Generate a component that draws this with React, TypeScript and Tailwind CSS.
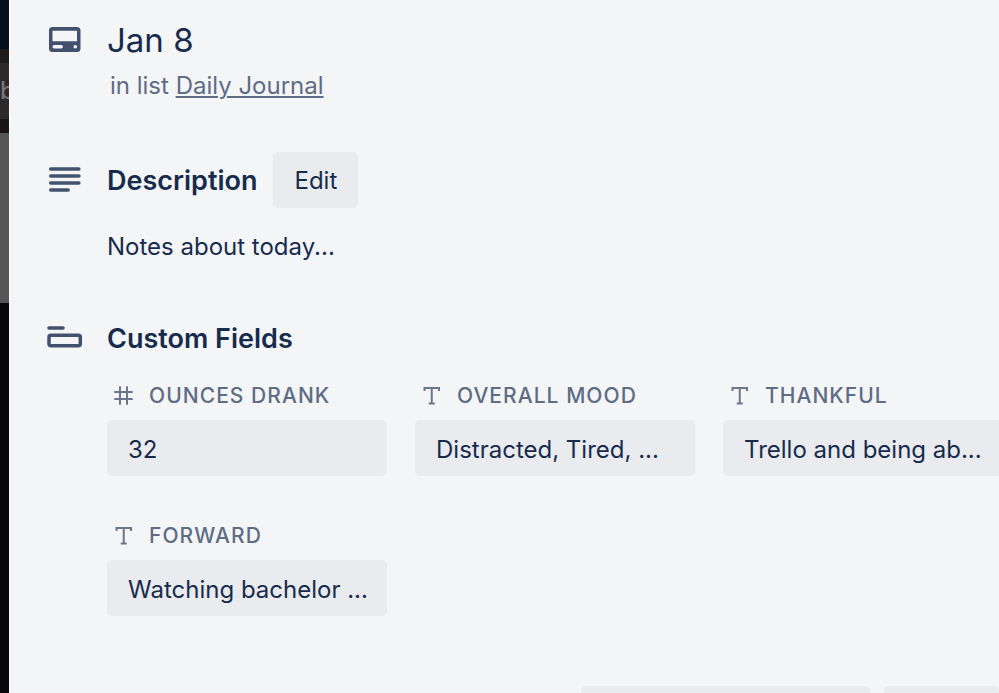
import { useState } from "react";
import type { ReactNode } from "react";

type FieldType = "number" | "text";

interface CustomField {
  id: string;
  name: string;
  type: FieldType;
  value: string;
}

const FIELDS: CustomField[] = [
  { id: "ounces", name: "Ounces Drank", type: "number", value: "32" },
  { id: "mood", name: "Overall Mood", type: "text", value: "Distracted, Tired, ..." },
  { id: "thankful", name: "Thankful", type: "text", value: "Trello and being ab..." },
  { id: "forward", name: "Forward", type: "text", value: "Watching bachelor ..." },
];

function CardIcon() {
  return (
    <svg viewBox="0 0 42 42" className="h-[42px] w-[42px]" aria-hidden="true">
      <path
        fill="currentColor"
        fillRule="evenodd"
        d="M8.500 8h24.500a3.500 3.500 0 0 1 3.500 3.500V29.500a3.500 3.500 0 0 1-3.500 3.500H8.500a3.500 3.500 0 0 1-3.500-3.500V11.500a3.500 3.500 0 0 1 3.500-3.500ZM8.500 11.700v10.500h24.500V11.700ZM10.200 26a1.700 1.700 0 0 0 0 3.400h7a1.700 1.700 0 0 0 0-3.400ZM31.300 25.900a1.800 1.800 0 1 0 0 3.600a1.800 1.800 0 1 0 0-3.600Z"
      />
    </svg>
  );
}

function DescriptionIcon() {
  return (
    <svg viewBox="0 0 42 42" className="h-[42px] w-[42px]" aria-hidden="true">
      <path
        d="M6.700 10h28.200M6.700 17h28.200M6.700 24h28.200M6.700 31h17.500"
        fill="none"
        stroke="currentColor"
        strokeWidth="3.500"
        strokeLinecap="round"
      />
    </svg>
  );
}

function FieldsIcon() {
  return (
    <svg viewBox="0 0 42 42" className="h-[42px] w-[42px]" aria-hidden="true">
      <g fill="none" stroke="currentColor" strokeWidth="3.500" strokeLinecap="round">
        <path d="M5 11h14" />
        <rect x="5" y="18.200" width="31.300" height="10.600" rx="2" />
      </g>
    </svg>
  );
}

function FieldTypeIcon({ type }: { type: FieldType }) {
  return (
    <svg viewBox="0 1 28 28" className="h-7 w-7 shrink-0 text-[#6b778c]" aria-hidden="true">
      {type === "number" ? (
        <path
          d="M11 6v17M18 6v17M6 11h17M6 18h17"
          fill="none"
          stroke="currentColor"
          strokeWidth="2"
          strokeLinecap="round"
        />
      ) : (
        <path
          d="M7.500 9V7h14.500v2M14.750 7v15.500M12.750 22.500h4"
          fill="none"
          stroke="currentColor"
          strokeWidth="2"
          strokeLinecap="square"
        />
      )}
    </svg>
  );
}

function SectionHeader({ icon, children }: { icon: ReactNode; children: ReactNode }) {
  return (
    <div className="flex h-14 items-center">
      <div className="w-[63px] shrink-0 text-[#42526e]">{icon}</div>
      {children}
    </div>
  );
}

function Field({ field }: { field: CustomField }) {
  const [value, setValue] = useState(field.value);

  return (
    <div>
      <label
        htmlFor={field.id}
        className="flex h-7 items-center gap-3 pl-0.5 text-[21px] leading-7 font-medium tracking-wider text-[#5e6c84] uppercase"
      >
        <FieldTypeIcon type={field.type} />
        {field.name}
      </label>
      <input
        id={field.id}
        type="text"
        inputMode={field.type === "number" ? "decimal" : "text"}
        value={value}
        onChange={(e) => setValue(e.target.value)}
        className="mt-2.5 block h-14 w-full rounded-[5px] bg-[#eaebef] pt-0.5 pr-3 pl-[21px] text-2xl text-ellipsis text-[#172b4d] outline-none"
      />
    </div>
  );
}

// Strip of the board that stays visible beside the open card
function BoardEdge() {
  return (
    <div className="flex w-[9px] shrink-0 flex-col overflow-hidden bg-[#07060c]" aria-hidden="true">
      <div className="h-[49px] shrink-0 bg-[#06101d]" />
      <div className="h-3.5 shrink-0 bg-[#211a1b]" />
      <div className="flex h-14 shrink-0 items-center bg-[#2d292a] text-2xl font-medium text-[#777475]">
        b
      </div>
      <div className="h-3.5 shrink-0 bg-[#1b1414]" />
      <div className="h-[170px] shrink-0 bg-[#555556]" />
    </div>
  );
}

export default function App() {
  return (
    <div className="flex h-screen overflow-hidden bg-[#f4f5f7] font-['Inter',sans-serif] text-[#172b4d]">
      <BoardEdge />
      <main className="min-w-0 flex-1 overflow-hidden border-l border-white pt-3 pl-[34px]">
        <header>
          <SectionHeader icon={<CardIcon />}>
            <h1 className="text-[33px] leading-10">Jan 8</h1>
          </SectionHeader>
          <p className="pl-[66px] text-2xl leading-9 text-[#5e6c84]">
            in list{" "}
            <a href="#daily-journal" className="underline">
              Daily Journal
            </a>
          </p>
        </header>

        <section className="mt-12">
          <SectionHeader icon={<DescriptionIcon />}>
            <h2 className="pt-0.5 text-[27px] leading-9 font-semibold">Description</h2>
            <button
              type="button"
              className="ml-4 h-14 rounded-[5px] bg-[#eaebef] px-[21px] pt-0.5 text-2xl"
            >
              Edit
            </button>
          </SectionHeader>
          <p className="mt-[21px] pl-[63px] text-2xl leading-9">Notes about today...</p>
        </section>

        <section className="mt-[45px]">
          <SectionHeader icon={<FieldsIcon />}>
            <h2 className="pt-0.5 text-[27px] leading-9 font-semibold">Custom Fields</h2>
          </SectionHeader>
          <div className="mt-4 ml-[63px] grid grid-cols-[repeat(3,280px)] gap-x-7 gap-y-[46px]">
            {FIELDS.map((field) => (
              <Field key={field.id} field={field} />
            ))}
          </div>
        </section>

        <div className="mt-[70px] flex justify-end gap-3.5">
          <button
            type="button"
            aria-label="Show details"
            className="h-14 w-[289px] rounded-[5px] bg-[#eaebef]"
          />
          <button
            type="button"
            aria-label="More"
            className="h-14 w-[115px] rounded-[5px] bg-[#eaebef]"
          />
        </div>
      </main>
    </div>
  );
}
